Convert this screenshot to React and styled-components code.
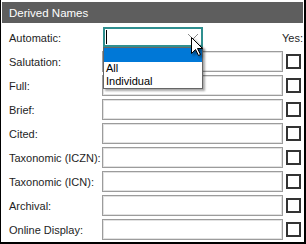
import React from "react";
import styled, { createGlobalStyle } from "styled-components";

const Global = createGlobalStyle`
  html, body { margin: 0; padding: 0; background: #fff; }
  body { font-family: "Liberation Sans", Arial, sans-serif; }
`;

const Panel = styled.div`
  box-sizing: border-box;
  width: 306px;
  height: 244px;
  border-left: 1px solid #000;
  border-right: 2px solid #000;
  border-bottom: 2px solid #000;
  padding: 2px 1px 0 1px;
  background: #fff;
  display: flex;
  flex-direction: column;
`;

const Header = styled.div`
  height: 21px;
  background: #5e5e5e;
  color: #fff;
  font-size: 11.5px;
  display: flex;
  align-items: center;
  padding-left: 7px;
`;

const Form = styled.div`
  display: grid;
  grid-template-columns: 93px 181px 18px;
  grid-auto-rows: 21px;
  row-gap: 3px;
  padding: 4px 2px 0 7px;
  align-items: center;
`;

const Label = styled.div`
  font-size: 11px;
  color: #1e1e1e;
  white-space: nowrap;
`;

const TextBox = styled.div`
  box-sizing: border-box;
  height: 21px;
  border: 1px solid #9c9c9c;
  box-shadow: inset 0 0 0 1px #e2e2e2;
  background: #fff;
`;

const Check = styled.div`
  box-sizing: border-box;
  width: 15px;
  height: 15px;
  justify-self: end;
  border: 2px solid #333;
  background: #fff;
`;

const YesLabel = styled.div`
  font-size: 11px;
  color: #1e1e1e;
  justify-self: end;
  margin-right: -2px;
  white-space: nowrap;
`;

const ComboWrap = styled.div`
  position: relative;
  height: 20px;
  width: 100px;
  margin-left: 1px;
  align-self: start;
`;

const Combo = styled.div`
  box-sizing: border-box;
  height: 20px;
  width: 100px;
  border: 2px solid #2f8f8f;
  background: #fff;
  display: flex;
  align-items: center;
  padding-left: 1px;
`;

const Caret = styled.div`
  width: 1px;
  height: 14px;
  background: #000;
`;

const Chevron = styled.svg`
  position: absolute;
  left: 84px;
  top: 6px;
`;

const Cursor = styled.svg`
  position: absolute;
  left: 88px;
  top: 10px;
  z-index: 3;
  filter: drop-shadow(2px 2px 1.5px rgba(0, 0, 0, 0.45));
`;

const List = styled.div`
  position: absolute;
  left: 0;
  top: 20px;
  box-sizing: border-box;
  width: 100px;
  border: 1px solid #666;
  background: #fff;
  box-shadow: 2px 2px 2px rgba(0, 0, 0, 0.35);
  z-index: 2;
`;

const Item = styled.div`
  height: ${(p) => (p.$first ? 14 : 13)}px;
  line-height: 13px;
  font-size: 11px;
  padding-left: 2px;
  color: ${(p) => (p.$selected ? "#fff" : "#000")};
  background: ${(p) => (p.$selected ? "#0078d7" : "#fff")};
`;

const rows = [
  "Salutation:",
  "Full:",
  "Brief:",
  "Cited:",
  "Taxonomic (ICZN):",
  "Taxonomic (ICN):",
  "Archival:",
  "Online Display:",
];

export default function App() {
  return (
    <>
      <Global />
      <Panel>
        <Header>Derived Names</Header>
        <Form>
          <Label>Automatic:</Label>
          <ComboWrap>
            <Combo>
              <Caret />
            </Combo>
            <Chevron width="12" height="8" viewBox="0 0 12 8">
              <path d="M1 1 L6 6 L11 1" fill="none" stroke="#8a8a8a" strokeWidth="1" />
            </Chevron>
            <List>
              <Item $selected $first>&nbsp;</Item>
              <Item>All</Item>
              <Item>Individual</Item>
            </List>
            <Cursor width="13" height="20" viewBox="0 0 13 20">
              <path
                d="M0.5 0.5 L0.5 16.5 L4.5 12.5 L7.5 18.5 L9.5 17.5 L6.5 11.5 L11.5 11.5 Z"
                fill="#fff"
                stroke="#000"
                strokeWidth="1"
                strokeLinejoin="miter"
              />
            </Cursor>
          </ComboWrap>
          <YesLabel>Yes:</YesLabel>
          {rows.map((r) => (
            <React.Fragment key={r}>
              <Label>{r}</Label>
              <TextBox />
              <Check />
            </React.Fragment>
          ))}
        </Form>
      </Panel>
    </>
  );
}
